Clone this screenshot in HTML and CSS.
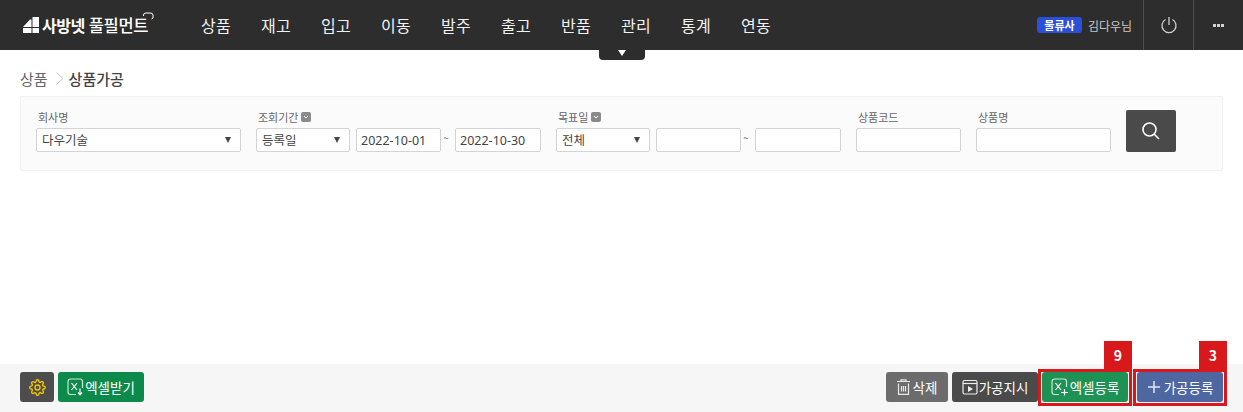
FILE: index.html
```html
<!DOCTYPE html>
<html lang="ko">
<head>
<meta charset="utf-8">
<title>상품가공</title>
<link rel="stylesheet" href="styles.css">
</head>
<body>
<div class="app">
  <header class="topbar">
    <div class="logo">
      <svg class="logo-mark" width="16" height="16" viewBox="0 0 16 16"><path d="M0 10 L7 2.500 H8.500 V10 Z M9.500 0 H16 V10 H9.500 Z M0 11 H8.500 V16 H0 Z M9.500 11 H16 V16 H9.500 Z" fill="#fff"/></svg>
      <span class="logo-bold">사방넷</span><span class="logo-light">풀필먼트</span>
      <svg class="logo-hook" width="11" height="9" viewBox="0 0 11 9"><path d="M0.500 4 V3 Q0.500 1 3 1 H7 Q10 1 10 3 V6 L8.500 7" fill="none" stroke="#fff" stroke-width="1"/></svg>
    </div>
    <nav class="menu">
      <a>상품</a><a>재고</a><a>입고</a><a>이동</a><a>발주</a><a>출고</a><a>반품</a><a>관리</a><a>통계</a><a>연동</a>
    </nav>
    <div class="user">
      <span class="badge">물류사</span>
      <span class="user-name">김다우님</span>
      <span class="icon-cell">
        <svg width="18" height="18" viewBox="0 0 18 18" fill="none" stroke="#d0d0d0" stroke-width="1.300"><path d="M5.500 3.500 A7 7 0 1 0 12.500 3.500"/><path d="M9 1 V9"/></svg>
      </span>
      <span class="icon-cell"><span class="dots"><i></i><i></i><i></i></span></span>
    </div>
    <button class="collapse" aria-label="메뉴 접기"><span class="tri"></span></button>
  </header>

  <main class="content">
    <div class="crumb"><span class="crumb-parent">상품</span><svg class="crumb-sep" width="8" height="13" viewBox="0 0 8 13"><path d="M0.500 0.500 L7 6.500 L0.500 12.500" fill="none" stroke="#c4c4c4"/></svg><strong>상품가공</strong></div>

    <section class="panel">
      <div class="field f-company">
        <label>회사명</label>
        <div class="select"><span>다우기술</span><i class="arrow"></i></div>
      </div>
      <div class="field f-period">
        <label>조회기간 <b class="chev"><svg width="10" height="10" viewBox="0 0 10 10"><path d="M3 4 L5 6 L7 4" fill="none" stroke="#fff"/></svg></b></label>
        <div class="row">
          <div class="select s-type"><span>등록일</span><i class="arrow"></i></div>
          <input class="input i-date" value="2022-10-01">
          <span class="tilde">~</span>
          <input class="input i-date2" value="2022-10-30">
        </div>
      </div>
      <div class="field f-target">
        <label>목표일<b class="chev"><svg width="10" height="10" viewBox="0 0 10 10"><path d="M3 4 L5 6 L7 4" fill="none" stroke="#fff"/></svg></b></label>
        <div class="row">
          <div class="select s-all"><span>전체</span><i class="arrow"></i></div>
          <input class="input i-date">
          <span class="tilde">~</span>
          <input class="input i-date3">
        </div>
      </div>
      <div class="field f-code">
        <label>상품코드</label>
        <input class="input i-code">
      </div>
      <div class="field f-name">
        <label>상품명</label>
        <input class="input i-name">
      </div>
      <button class="search" aria-label="검색">
        <svg width="20" height="20" viewBox="0 0 20 20" fill="none" stroke="#fff" stroke-width="1.600"><circle cx="8.500" cy="8.500" r="6.500"/><path d="M13.300 13.300 L18 18"/></svg>
      </button>
    </section>
  </main>

  <footer class="footer">
    <div class="group">
      <button class="btn b-gear" aria-label="설정">
        <svg width="17" height="17" viewBox="0 0 24 24" fill="none" stroke="#f2c200" stroke-width="2"><circle cx="12" cy="12" r="3.500"/><path d="M19.400 15a1.650 1.650 0 0 0 .33 1.820l.06.06a2 2 0 0 1 0 2.830 2 2 0 0 1-2.830 0l-.06-.06a1.650 1.650 0 0 0-1.820-.33 1.650 1.650 0 0 0-1 1.510V21a2 2 0 0 1-2 2 2 2 0 0 1-2-2v-.09A1.650 1.650 0 0 0 9 19.400a1.650 1.650 0 0 0-1.820.33l-.06.06a2 2 0 0 1-2.830 0 2 2 0 0 1 0-2.830l.06-.06a1.650 1.650 0 0 0 .33-1.820 1.650 1.650 0 0 0-1.510-1H3a2 2 0 0 1-2-2 2 2 0 0 1 2-2h.09A1.650 1.650 0 0 0 4.600 9a1.650 1.650 0 0 0-.33-1.820l-.06-.06a2 2 0 0 1 0-2.830 2 2 0 0 1 2.830 0l.06.06a1.650 1.650 0 0 0 1.820.33H9a1.650 1.650 0 0 0 1-1.510V3a2 2 0 0 1 2-2 2 2 0 0 1 2 2v.09a1.650 1.650 0 0 0 1 1.510 1.650 1.650 0 0 0 1.820-.33l.06-.06a2 2 0 0 1 2.830 0 2 2 0 0 1 0 2.830l-.06.06a1.650 1.650 0 0 0-.33 1.820V9a1.650 1.650 0 0 0 1.510 1H21a2 2 0 0 1 2 2 2 2 0 0 1-2 2h-.09a1.650 1.650 0 0 0-1.510 1z"/></svg>
      </button>
      <button class="btn b-green b-excel">
        <svg width="17" height="18" viewBox="0 0 17 18" fill="none" stroke="#cfe8d8" stroke-width="1.200"><path d="M9 16.500 H3.500 Q1 16.500 1 14 V4 Q1 1 4 1 H13 Q15.500 1 15.500 3.500 V10"/><path d="M4.500 5 L10 12 M10 5 L4.500 12" stroke="#fff"/><path d="M13 10.500 V16.500 M11 14.500 L13 16.800 L15 14.500" stroke="#fff"/></svg>
        엑셀받기
      </button>
    </div>
    <div class="group">
      <button class="btn b-gray b-del">
        <svg width="13" height="16" viewBox="0 0 13 16" fill="none" stroke="#e8e8e8" stroke-width="1.200"><path d="M0 2.500 H13 M4 2.500 V0.800 H9 V2.500 M1.500 4.500 V15.300 H11.500 V4.500"/><path d="M4.500 7 V12.500 M6.500 7 V12.500 M8.500 7 V12.500"/></svg>
        삭제
      </button>
      <button class="btn b-dark b-play">
        <svg width="16" height="16" viewBox="0 0 16 16" fill="none" stroke="#eee" stroke-width="1.200"><rect x="1" y="1.500" width="14" height="13.500" rx="1.500"/><path d="M1 4.500 H15"/><path d="M6 7 L11 10 L6 13 Z" fill="#eee" stroke="none"/></svg>
        가공지시
      </button>
      <div class="marked">
        <button class="btn b-green2 b-excel">
          <svg width="18" height="18" viewBox="0 0 18 18" fill="none" stroke="#cfe8d8" stroke-width="1.200"><path d="M8 16.500 H3.500 Q1 16.500 1 14 V4 Q1 1 4 1 H13 Q15.500 1 15.500 3.500 V9"/><path d="M4.500 5 L10 12 M10 5 L4.500 12" stroke="#fff"/><path d="M13.500 11 V17.500 M10 14.500 H17" stroke="#fff"/></svg>
          엑셀등록
        </button>
        <span class="mark-frame"></span><span class="mark-tag">9</span>
      </div>
      <div class="marked">
        <button class="btn b-blue">
          <svg width="14" height="14" viewBox="0 0 14 14" fill="none" stroke="#e4e8f2" stroke-width="1.500"><path d="M7 1 V13 M1 7 H13"/></svg>
          가공등록
        </button>
        <span class="mark-frame"></span><span class="mark-tag">3</span>
      </div>
    </div>
  </footer>
</div>
</body>
</html>
```

FILE: styles.css
```css
* { box-sizing: border-box; }
html, body { margin: 0; height: 100%; }
body {
  font-family: "Noto Sans CJK KR", "Noto Sans", sans-serif;
  color: #333;
  background: #fff;
  overflow: hidden;
}
.app { display: flex; flex-direction: column; height: 412px; }

/* top bar */
.topbar {
  position: relative;
  flex: none;
  display: flex;
  align-items: center;
  height: 50px;
  padding-left: 23px;
  background: #2d2d2d;
  color: #fff;
}
.logo { position: relative; display: flex; align-items: center; width: 178px; flex: none; }
.logo-mark { margin-right: 3px; }
.logo-bold { font-size: 16px; font-weight: 700; letter-spacing: -0.5px; margin-right: 4px; }
.logo-light { font-size: 16.500px; font-weight: 500; letter-spacing: -0.300px; }
.logo-hook { position: absolute; left: 120px; top: -1px; }
.menu { display: flex; gap: 30px; flex: none; }
.menu a { width: 30px; font-size: 16px; line-height: 22px; white-space: nowrap; color: #f2f2f2; letter-spacing: 0.200px; }
.user { display: flex; align-items: center; margin-left: auto; height: 50px; }
.badge {
  width: 45px; height: 16px; margin-right: 6px;
  border-radius: 3px;
  background: #2a4fd8;
  color: #fff;
  font-size: 11px; font-weight: 700; line-height: 16px; text-align: center;
}
.user-name { width: 55px; font-size: 12px; color: #c9c9c9; }
.icon-cell {
  display: flex; align-items: center; justify-content: center;
  width: 50px; height: 50px;
  border-left: 1px solid #4d4d4d;
}
.dots { display: flex; gap: 1px; }
.dots i { width: 3px; height: 3px; background: #d2d2d2; }
.collapse {
  position: absolute; left: 599px; top: 50px;
  width: 46px; height: 10px;
  padding: 0; border: 0;
  border-radius: 0 0 4px 4px;
  background: #2d2d2d;
  display: flex; justify-content: center;
}
.tri { width: 0; height: 0; margin-top: 0; border: 4.500px solid transparent; border-top: 6px solid #fff; border-bottom: 0; }

/* content */
.content { flex: 1; padding: 0 20px; }
.crumb { display: flex; align-items: center; height: 46px; padding-bottom: 1px; padding-top: 11px; font-size: 15px; color: #666; }
.crumb-sep { margin: 0 5px 0 8px; }
.crumb strong { font-weight: 500; color: #444; }
.panel {
  display: flex;
  height: 75px;
  padding: 13px 0 0 15px;
  background: #fbfbfb;
  border: 1px solid #f1f1f1;
  border-radius: 2px;
}
.field { display: flex; flex-direction: column; flex: none; }
.field label { display: flex; align-items: center; gap: 3px; height: 18px; padding: 0 0 4px 2px; font-size: 11px; color: #666; white-space: nowrap; }
.row { display: flex; align-items: center; }
.chev { display: inline-flex; width: 10px; height: 10px; border-radius: 2px; background: #8a8a8a; }
.select, .input {
  height: 24px;
  background: #fff;
  border: 1px solid #d4d4d4;
  border-radius: 2px;
  font-family: inherit;
  font-size: 12.500px;
  color: #444;
}
.select { display: flex; align-items: center; justify-content: space-between; padding: 0 9px 2px 5px; }
.arrow { width: 0; height: 0; margin-top: 2px; border: 3.500px solid transparent; border-top: 6px solid #444; border-bottom: 0; }
.input { padding: 0 4px; font-family: "Noto Sans", sans-serif; outline: none; }
.tilde { width: 14px; padding-bottom: 6px; text-align: center; font-size: 10px; color: #666; margin-left: -2px; margin-right: 2px; }
.f-company { width: 220px; }
.f-company .select { width: 205px; }
.f-period { width: 300px; }
.s-type { width: 94px; margin-right: 6px; }
.i-date { width: 85px; }
.i-date2 { width: 86px; }
.f-target { width: 300px; }
.s-all { width: 94px; margin-right: 6px; }
.i-date3 { width: 86px; }
.f-code { width: 120px; }
.i-code { width: 105px; }
.f-name { width: 150px; }
.i-name { width: 135px; }
.search {
  flex: none;
  display: flex; align-items: center; justify-content: center;
  width: 50px; height: 42px;
  padding: 0; border: 0; border-radius: 2px;
  background: #4a4a4a;
}

/* footer */
.footer {
  flex: none;
  display: flex; justify-content: space-between;
  height: 48px;
  padding: 8px 20px 0;
  background: #f6f6f6;
}
.group { display: flex; align-items: flex-start; gap: 4px; }
.btn {
  display: flex; align-items: center; justify-content: center; gap: 1px;
  height: 30px;
  padding: 0;
  border: 0; border-radius: 3px;
  font-family: inherit;
  font-size: 13.500px;
  color: #fff;
  white-space: nowrap;
}
.b-gear { width: 34px; background: #4d4d4d; }
.b-green { width: 86px; background: #0c8a4b; }
.b-green2 { width: 86px; background: #1e9254; }
.b-gray { width: 62px; background: #6c6c6c; gap: 3px; }
.b-dark { width: 86px; background: #4a4a4a; }
.b-blue { width: 86px; background: #4e67a0; gap: 3px; }
.marked { position: relative; height: 30px; }
.marked + .marked { margin-left: 5px; }
.mark-frame { position: absolute; left: -4px; top: -3px; right: -4px; bottom: -4px; border: 3px solid #d9181b; pointer-events: none; }
.mark-tag {
  position: absolute; right: -4px; top: -31px;
  width: 28px; height: 28px;
  background: #d9181b;
  color: #fff;
  font-size: 14px; font-weight: 700; line-height: 28px; text-align: center;
}
```
